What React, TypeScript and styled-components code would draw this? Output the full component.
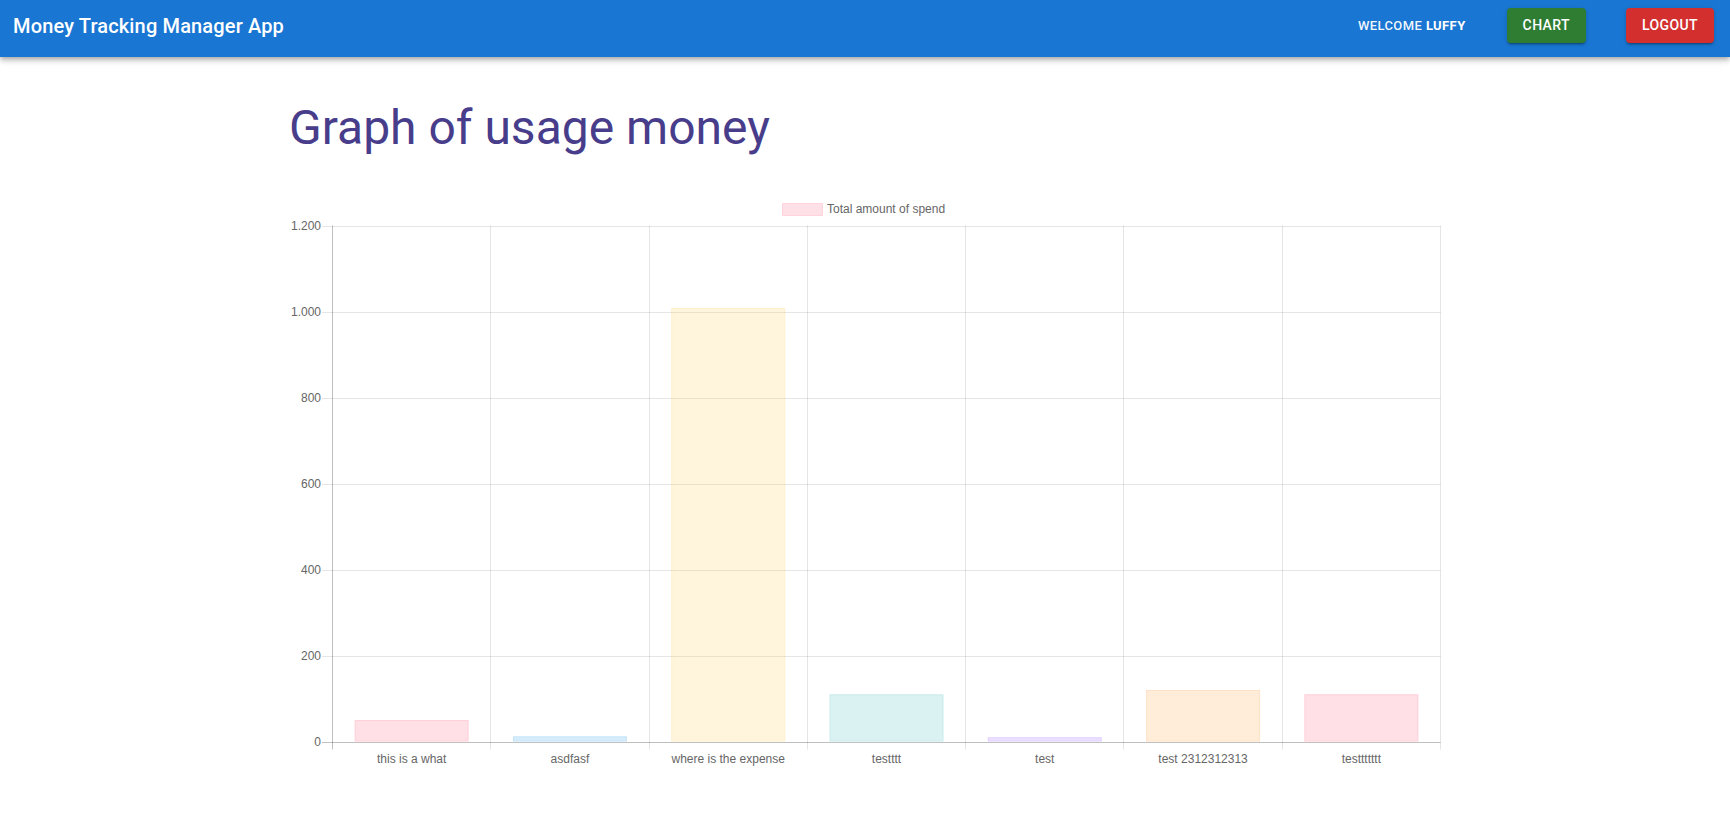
import React from "react";
import styled, { createGlobalStyle } from "styled-components";

const GlobalStyle = createGlobalStyle`
  html, body {
    margin: 0;
    padding: 0;
    background: #ffffff;
    font-family: Roboto, "Liberation Sans", Arial, sans-serif;
  }
  * { box-sizing: border-box; }
`;

const AppBar = styled.header`
  height: 57px;
  background: #1976d2;
  color: #fff;
  display: flex;
  align-items: center;
  padding: 0 16px 6px 13px;
  box-shadow: 0px 2px 4px -1px rgba(0, 0, 0, 0.2),
    0px 4px 5px 0px rgba(0, 0, 0, 0.14), 0px 1px 10px 0px rgba(0, 0, 0, 0.12);
  position: relative;
  z-index: 2;
`;

const Brand = styled.div`
  flex: 1;
  font-size: 20px;
  font-weight: 500;
  letter-spacing: 0.15px;
  line-height: 1.6;
`;

const Welcome = styled.div`
  font-size: 13px;
  font-weight: 500;
  letter-spacing: 0.4px;
  text-transform: uppercase;
  margin-right: 41px;
  line-height: 23px;
  color: rgba(255, 255, 255, 0.95);
  b {
    font-weight: 700;
    color: #fff;
  }
`;

const NavButton = styled.button<{ $tone: "success" | "error"; $gap?: number }>`
  border: 0;
  border-radius: 4px;
  padding: 6px 16px;
  height: 35px;
  font-family: Roboto, "Liberation Sans", Arial, sans-serif;
  font-size: 14px;
  font-weight: 500;
  line-height: 23px;
  letter-spacing: 0.4px;
  text-transform: uppercase;
  color: #fff;
  cursor: pointer;
  margin-right: ${(p) => p.$gap ?? 0}px;
  background: ${(p) => (p.$tone === "success" ? "#2e7d32" : "#d32f2f")};
  box-shadow: 0px 3px 1px -2px rgba(0, 0, 0, 0.2),
    0px 2px 2px 0px rgba(0, 0, 0, 0.14), 0px 1px 5px 0px rgba(0, 0, 0, 0.12);
`;

const Container = styled.main`
  max-width: 1200px;
  margin: 0 auto;
  padding: 0 24px;
`;

const Heading = styled.h3`
  margin: 43px 0 37px;
  font-size: 48px;
  font-weight: 400;
  line-height: 56px;
  color: #483d8b;
`;

const ChartBox = styled.div`
  width: 1152px;
  height: 576px;
  svg {
    display: block;
  }
`;

const labels = [
  "this is a what",
  "asdfasf",
  "where is the expense",
  "testttt",
  "test",
  "test 2312312313",
  "testtttttt",
];
const values = [50, 12, 1010, 110, 10, 120, 110];
const colors = [
  "255,99,132",
  "54,162,235",
  "255,206,86",
  "75,192,192",
  "153,102,255",
  "255,159,64",
  "255,99,132",
];

const W = 1152;
const H = 576;
const left = 43.5;
const right = 1151.5;
const top = 33.5;
const bottom = 548.5;
const maxV = 1200;
const steps = 6;
const catW = (right - left) / labels.length;
const stepH = (bottom - top) / steps;

const fmt = (n: number) => n.toLocaleString("de-DE");

const BarChart: React.FC = () => {
  const grid = "rgba(0,0,0,0.1)";
  const zero = "rgba(0,0,0,0.25)";
  const font = { fontFamily: "'Liberation Sans', Arial, sans-serif", fontSize: 12, fill: "#666" };
  return (
    <svg width={W} height={H} viewBox={`0 0 ${W} ${H}`}>
      {/* legend */}
      <rect x={493.5} y={10.5} width={40} height={12} fill="rgba(255,99,132,0.2)" stroke="rgba(255,99,132,0.2)" />
      <text x={538} y={16.5} dominantBaseline="middle" {...font}>
        Total amount of spend
      </text>

      {/* horizontal grid + y labels */}
      {Array.from({ length: steps + 1 }).map((_, j) => {
        const y = Math.round(top + j * stepH) + 0.5 - (j === 0 ? 1 : 0);
        const v = maxV - j * (maxV / steps);
        return (
          <g key={j}>
            <line x1={33} x2={right} y1={y} y2={y} stroke={j === steps ? zero : grid} strokeWidth={1} />
            <text x={32} y={y} textAnchor="end" dominantBaseline="middle" {...font}>
              {fmt(v)}
            </text>
          </g>
        );
      })}

      {/* vertical grid */}
      {Array.from({ length: labels.length + 1 }).map((_, i) => {
        const x = Math.round(left + i * catW - 0.5) + 0.5;
        return (
          <line key={i} x1={x} x2={x} y1={top - 1} y2={bottom + 8} stroke={i === 0 ? zero : grid} strokeWidth={1} />
        );
      })}

      {/* bars */}
      {values.map((v, i) => {
        const bw = catW * 0.72;
        const cx = left + i * catW + catW / 2;
        const h = (v / maxV) * (bottom - top);
        const x = cx - bw / 2;
        const y = bottom - h;
        return (
          <g key={i}>
            <rect x={x} y={y} width={bw} height={h} fill={`rgba(${colors[i]},0.2)`} />
            <rect
              x={x + 0.5}
              y={y + 0.5}
              width={bw - 1}
              height={Math.max(h - 1, 0)}
              fill="none"
              stroke={`rgba(${colors[i]},0.12)`}
            />
          </g>
        );
      })}

      {/* x labels */}
      {labels.map((l, i) => (
        <text
          key={l}
          x={left + i * catW + catW / 2}
          y={567}
          textAnchor="middle"
          dominantBaseline="middle"
          {...font}
        >
          {l}
        </text>
      ))}
    </svg>
  );
};

export default function App() {
  return (
    <>
      <GlobalStyle />
      <AppBar>
        <Brand>Money Tracking Manager App</Brand>
        <Welcome>
          Welcome <b>Luffy</b>
        </Welcome>
        <NavButton $tone="success" $gap={40}>
          Chart
        </NavButton>
        <NavButton $tone="error">Logout</NavButton>
      </AppBar>
      <Container>
        <Heading>Graph of usage money</Heading>
        <ChartBox>
          <BarChart />
        </ChartBox>
      </Container>
    </>
  );
}
